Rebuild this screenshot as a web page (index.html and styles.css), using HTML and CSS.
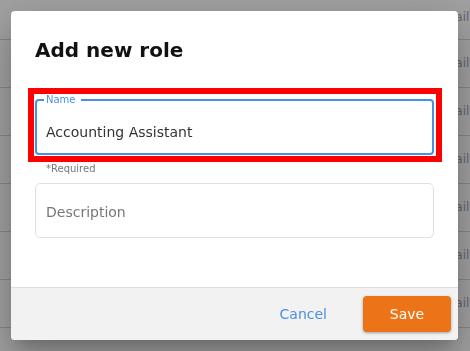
FILE: index.html
```html
<!DOCTYPE html>
<html lang="en">
<head>
    <meta charset="UTF-8">
    <meta name="viewport" content="width=device-width, initial-scale=1.0">
    <title>Roles</title>
    <link rel="stylesheet" href="styles.css">
</head>
<body>

    <!-- Page behind the dialog -->
    <div class="page">
        <div class="row row-head">Email</div>
        <div class="row">Email</div>
        <div class="row">Email</div>
        <div class="row">Email</div>
        <div class="row">Email</div>
        <div class="row">Email</div>
        <div class="row">Email</div>
    </div>

    <div class="backdrop">
        <div class="dialog">
            <div class="dialog-body">
                <h2 class="dialog-title">Add new role</h2>

                <div class="name-field">
                    <fieldset class="field field-focused">
                        <legend>Name</legend>
                        <input type="text" id="roleName" value="Accounting Assistant">
                    </fieldset>
                </div>
                <div class="helper">*Required</div>

                <div class="field field-plain">
                    <input type="text" id="roleDescription" placeholder="Description">
                </div>
            </div>

            <div class="dialog-footer">
                <button class="btn-text">Cancel</button>
                <button class="btn-save">Save</button>
            </div>
        </div>
    </div>

</body>
</html>
```

FILE: styles.css
```css
body {
    font-family: "DejaVu Sans", Verdana, sans-serif;
    margin: 0;
    background: #fff;
    height: 100vh;
    overflow: hidden;
}
.page {
    width: 100%;
}
.row {
    height: 47px;
    border-bottom: 1px solid #d6d6d6;
    padding-left: 436px;
    font-size: 12px;
    line-height: 47px;
    color: #a996b0;
    white-space: nowrap;
}
.row-head {
    height: 39px;
    line-height: 34px;
}
.backdrop {
    position: fixed;
    top: 0;
    left: 0;
    right: 0;
    bottom: 0;
    background: rgba(0, 0, 0, 0.37);
    display: flex;
    align-items: center;
    justify-content: center;
}
.dialog {
    width: 447px;
    margin-right: 1px;
    background: #fff;
    border-radius: 4px;
    overflow: hidden;
    box-shadow: 0 11px 15px -7px rgba(0, 0, 0, 0.2),
                0 24px 38px 3px rgba(0, 0, 0, 0.14),
                0 9px 46px 8px rgba(0, 0, 0, 0.12);
}
.dialog-body {
    padding: 24px 24px 49px;
}
.dialog-title {
    margin: 0 0 29px;
    font-size: 20px;
    line-height: 30px;
    font-weight: bold;
    color: #111;
}
.name-field {
    position: relative;
}
/* red highlight drawn round the focused field */
.name-field::after {
    content: "";
    position: absolute;
    top: -6px;
    left: -7px;
    right: -8px;
    bottom: -7px;
    border: 6px solid #ff0000;
    pointer-events: none;
}
.field {
    margin: 0;
    min-width: 0;
    box-sizing: border-box;
}
.field input {
    display: block;
    width: 100%;
    box-sizing: border-box;
    border: none;
    outline: none;
    background: transparent;
    font-family: "DejaVu Sans", Verdana, sans-serif;
    font-size: 14px;
    line-height: 16px;
    color: #333;
}
.field-focused {
    border: 2px solid #4a90e2;
    border-radius: 4px;
    padding: 0 0 0 7px;
}
.field-focused legend {
    padding: 0 5px 0 2px;
    font-size: 10px;
    line-height: 12px;
    color: #4a90e2;
}
.field-focused input {
    height: 47px;
    padding: 18px 0 13px 2px;
}
.helper {
    margin-top: 8px;
    padding-left: 11px;
    font-size: 10px;
    line-height: 12px;
    color: #777;
}
.field-plain {
    margin-top: 8px;
    border: 1px solid #e0e0e0;
    border-radius: 5px;
}
.field-plain input {
    height: 53px;
    padding: 20px 0 17px 10px;
}
.field-plain input::placeholder {
    color: #777;
}
.dialog-footer {
    display: flex;
    justify-content: flex-end;
    align-items: center;
    gap: 20px;
    height: 52px;
    padding: 0 7px 0 0;
    border-top: 1px solid #dcdcdc;
    background: #f2f2f2;
}
button {
    font-family: "DejaVu Sans", Verdana, sans-serif;
    font-size: 14px;
    height: 36px;
    border: none;
    cursor: pointer;
}
.btn-text {
    padding: 0 16px;
    background: none;
    color: #4a90e2;
}
.btn-save {
    width: 88px;
    padding: 0;
    background: #ec7317;
    color: #fff;
    border-radius: 4px;
    box-shadow: 0 1px 3px rgba(0, 0, 0, 0.35);
}
.btn-save:hover {
    background: #d96510;
}
```
